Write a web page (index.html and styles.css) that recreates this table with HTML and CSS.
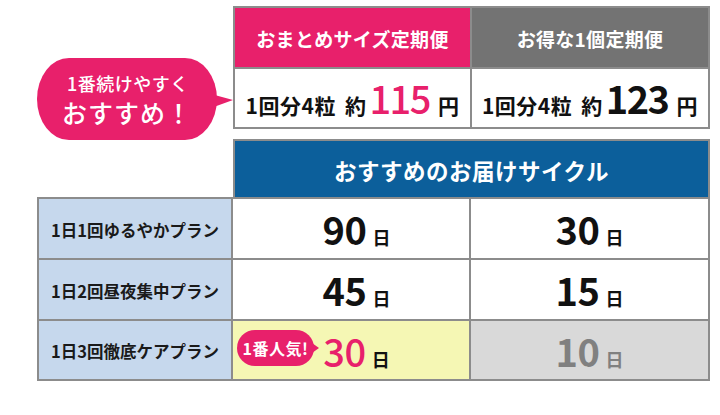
FILE: index.html
```html
<!DOCTYPE html>
<html lang="ja">
<head>
<meta charset="utf-8">
<link rel="stylesheet" href="styles.css">
</head>
<body>
<div class="page">
  <div class="top">
    <div class="callout-area">
      <div class="bubble">
        <span class="b-l1">1番続けやすく</span>
        <span class="b-l2">おすすめ！</span>
      </div>
    </div>
    <div class="plans">
      <div class="plan-head head-pink">おまとめサイズ定期便</div>
      <div class="plan-head head-gray">お得な1個定期便</div>
      <div class="price"><span class="p-txt">1回分4粒</span><span class="p-txt p-gap">約</span><span class="p-num p-pink">115</span><span class="p-txt">円</span></div>
      <div class="price"><span class="p-txt">1回分4粒</span><span class="p-txt p-gap">約</span><span class="p-num">123</span><span class="p-txt">円</span></div>
    </div>
  </div>
  <div class="cycle">
    <div class="cycle-head">おすすめのお届けサイクル</div>
    <div class="grid">
      <div class="cell label">1日1回ゆるやかプラン</div>
      <div class="cell day col2"><span class="d-num">90</span><span class="d-unit">日</span></div>
      <div class="cell day"><span class="d-num">30</span><span class="d-unit">日</span></div>

      <div class="cell label">1日2回昼夜集中プラン</div>
      <div class="cell day col2"><span class="d-num">45</span><span class="d-unit">日</span></div>
      <div class="cell day"><span class="d-num">15</span><span class="d-unit">日</span></div>

      <div class="cell label">1日3回徹底ケアプラン</div>
      <div class="cell day col2 hl">
        <span class="badge">1番人気!</span>
        <span class="d-num d-pink">30</span><span class="d-unit">日</span>
      </div>
      <div class="cell day muted"><span class="d-num">10</span><span class="d-unit">日</span></div>
    </div>
  </div>
</div>
</body>
</html>
```

FILE: styles.css
```css
* { box-sizing: border-box; }
html, body { margin: 0; padding: 0; background: #fff; }
body {
  font-family: "Noto Sans CJK JP", "Noto Sans", sans-serif;
  color: #111;
}
.page {
  width: 720px;
  height: 415px;
  padding-top: 6px;
}
.top {
  display: flex;
  height: 123px;
}
.callout-area {
  width: 233px;
  flex: none;
  padding-top: 52px;
  padding-left: 37px;
}
.bubble {
  position: relative;
  width: 180px;
  height: 82px;
  background: #e8206b;
  border-radius: 32px / 41px;
  color: #fff;
  display: flex;
  flex-direction: column;
  align-items: center;
  justify-content: center;
  font-weight: 500;
  z-index: 1;
  padding-top: 3px;
}
.bubble::after {
  content: "";
  position: absolute;
  right: -16px;
  top: 36px;
  border-style: solid;
  border-width: 6px 0 8px 22px;
  border-color: transparent transparent transparent #e8206b;
}
.b-l1 { font-size: 18px; line-height: 1.3; padding-left: 2px; letter-spacing: 0.5px; }
.b-l2 { font-size: 25px; line-height: 1.3; letter-spacing: 1px; margin-top: 1px; }

.plans {
  width: 477px;
  display: grid;
  grid-template-columns: 235px 236px;
  grid-template-rows: 59px 58px;
  gap: 2px;
  padding: 2px;
  background: #8c8c8c;
}
.plan-head {
  display: flex;
  align-items: center;
  justify-content: center;
  color: #fff;
  font-size: 19px;
  font-weight: 700;
  padding-top: 2px;
  letter-spacing: 0.3px;
}
.head-pink { background: #e8206b; }
.head-gray { background: #737373; }
.price {
  background: #fff;
  display: flex;
  align-items: baseline;
  justify-content: center;
  align-content: center;
  flex-wrap: wrap;
  line-height: 1;
}
.p-txt { font-size: 21px; font-weight: 700; letter-spacing: 0.5px; }
.p-gap { margin-left: 9px; }
.p-num {
  font-size: 38px;
  font-weight: 700;
  letter-spacing: -1.5px;
  margin: 0 8px 0 3px;
}
.p-pink { color: #e8206b; font-weight: 500; }

.cycle { margin-top: 10px; }
.cycle-head {
  margin-left: 233px;
  width: 477px;
  height: 58px;
  background: #0c5f9b;
  border: 2px solid #8c8c8c;
  border-bottom: 0;
  color: #fff;
  font-size: 22.5px;
  font-weight: 700;
  letter-spacing: 0.5px;
  display: flex;
  align-items: center;
  justify-content: center;
  padding-top: 2px;
}
.grid {
  margin-left: 37px;
  width: 673px;
  display: grid;
  grid-template-columns: 192px 236px 237px;
  grid-template-rows: 59px 59px 58px;
  gap: 2px;
  padding: 2px;
  background: #8c8c8c;
}
.cell {
  background: #fff;
  display: flex;
  align-items: center;
  justify-content: center;
  padding-top: 1px;
  line-height: 1;
}
.label {
  background: #c6d8ed;
  font-size: 16.5px;
  font-weight: 700;
  color: #1a1a1a;
  padding-top: 3px;
}
.day { align-items: baseline; flex-wrap: wrap; align-content: center; }
.col2 { padding-left: 11px; position: relative; }
.d-num { font-size: 38px; font-weight: 700; letter-spacing: -0.5px; }
.d-unit { font-size: 18px; font-weight: 700; margin-left: 6px; }
.d-pink { color: #e8206b; font-weight: 500; }
.hl { background: #f5f7b4; }
.muted { background: #d9d9d9; color: #808080; }

.badge {
  position: absolute;
  left: 4px;
  top: 9px;
  width: 77px;
  height: 36px;
  border-radius: 18px;
  background: #e8206b;
  color: #fff;
  font-size: 16px;
  font-weight: 700;
  line-height: 1;
  display: flex;
  align-items: center;
  justify-content: center;
  letter-spacing: 0.5px;
}
.badge::after {
  content: "";
  position: absolute;
  right: -5px;
  top: 13px;
  border-style: solid;
  border-width: 5px 0 5px 7px;
  border-color: transparent transparent transparent #e8206b;
}
```
